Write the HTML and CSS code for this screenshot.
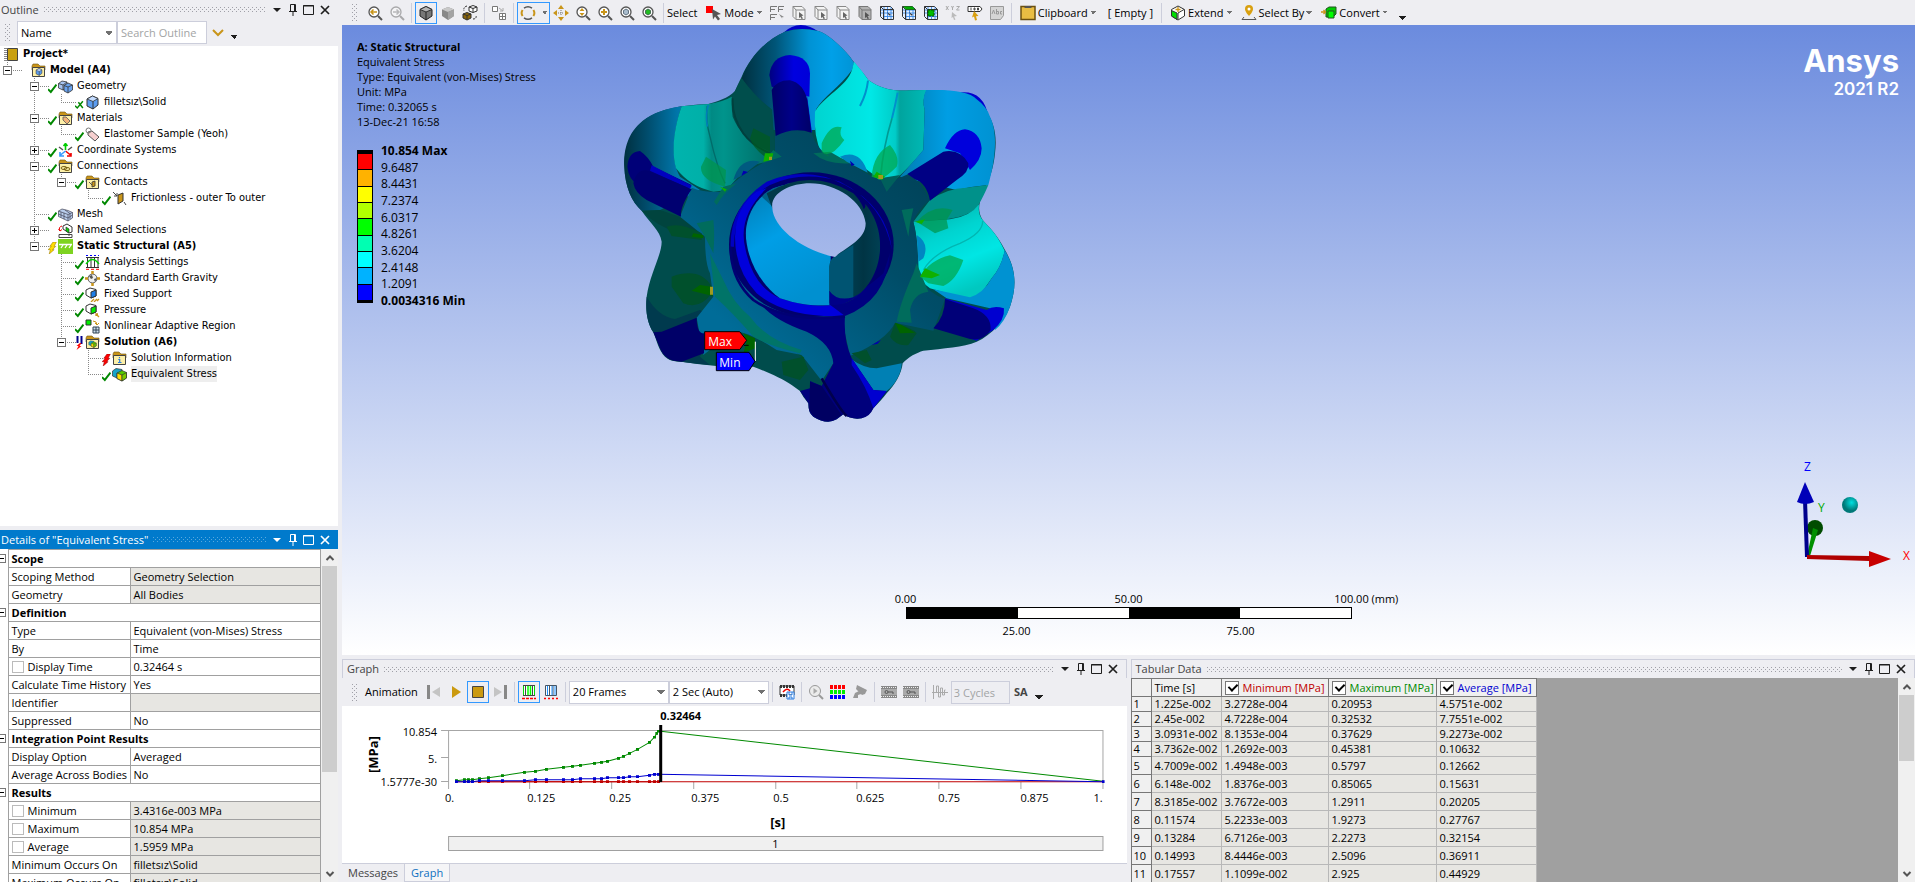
FILE: index.html
```html
<!DOCTYPE html>
<html lang="en">
<head>
  <meta charset="UTF-8" />
  <meta name="viewport" content="width=device-width, initial-scale=1.0"/>
  <title>A: Static Structural - Mechanical</title>
  <link rel="stylesheet" href="styles.css">
</head>
<body>

  <!-- shared icons -->
  <svg class="defs" aria-hidden="true">
    <symbol id="i-down" viewBox="0 0 14 14"><path d="M3 5h8l-4 4z" fill="currentColor"/></symbol>
    <symbol id="i-pin" viewBox="0 0 14 14"><path d="M4.500 8V1.500h5V8M3 8.500h8M7 9v4M8.500 2v6" fill="none" stroke="currentColor"/></symbol>
    <symbol id="i-max" viewBox="0 0 14 14"><path d="M1.500 2.500h10v9h-10zM1 3h11" fill="none" stroke="currentColor"/></symbol>
    <symbol id="i-close" viewBox="0 0 14 14"><path d="M3 3l8 8M11 3l-8 8" stroke="currentColor" stroke-width="1.700"/></symbol>
    <symbol id="i-up" viewBox="0 0 14 14"><path d="M3.500 9L7 5.500 10.500 9" fill="none" stroke="#555" stroke-width="2"/></symbol>
    <symbol id="i-dn" viewBox="0 0 14 14"><path d="M3.500 5L7 8.500 10.500 5" fill="none" stroke="#555" stroke-width="2"/></symbol>

    <symbol id="s-check" viewBox="0 0 8 9"><path d="M0 5.500L2.500 8 7.500 1.500" fill="none" stroke="#080" stroke-width="1.700"/></symbol>
    <symbol id="s-cross" viewBox="0 0 8 9"><path d="M0 6l2 2 5-6M3 3l4 5" fill="none" stroke="#080" stroke-width="1.300"/></symbol>
    <symbol id="s-bolt" viewBox="0 0 8 11"><path d="M4.500 0h3L5.500 4H7l-3 3h1.500L1 11l1-4H0l3-3H1.500z" fill="#fd0" stroke="#970" stroke-width=".5"/></symbol>
    <symbol id="s-bolt-red" viewBox="0 0 8 11"><path d="M4.500 0h3L5.500 4H7l-3 3h1.500L1 11l1-4H0l3-3H1.500z" fill="#f00" stroke="#900" stroke-width=".5"/></symbol>
    <symbol id="s-solve" viewBox="0 0 8 14"><path d="M1 0h2v7H1zM5 0h2v8H5z" fill="#00008b"/><path d="M4.500 7L1 10h2l-2 4 5-4H4l2-3z" fill="#f00"/></symbol>

    <symbol id="i-project" viewBox="0 0 15 15"><path d="M3.500 1.500h10v12h-10z" fill="#c9a010" stroke="#444"/><path d="M1.500 1v13" stroke="#888" stroke-width="3" stroke-dasharray="1 1"/></symbol>
    <symbol id="i-folder" viewBox="0 0 15 15"><path d="M1 3l1-2h5l2 2h5v4H1z" fill="#c9951a" stroke="#6b5010" stroke-width=".6"/><path d="M1.500 4.500h12v9h-12z" fill="#fdf0a8" stroke="#444"/></symbol>
    <symbol id="i-cube" viewBox="0 0 15 15"><path d="M2 4l5.500-3L13 3.500V10l-5 4-6-3z" fill="#5c9df0" stroke="#333"/><path d="M2 4l6 2.500L13 3.500 7.500 1z" fill="#c4dcff" stroke="#333" stroke-width=".8"/><path d="M8 6.500V14" stroke="#333"/></symbol>
    <symbol id="i-cubes" viewBox="0 0 15 15"><g stroke="#333" stroke-width=".8"><path d="M.5 4.500L4 2l5 1v5L5 11 .5 9z" fill="#a6c3ef"/><path d="M.5 4.500L5 6l4-3M5 6v5" fill="none"/><path d="M6 6.500L10 4l4.500 2v5L10 14l-4-2z" fill="#6aa3ee"/><path d="M6 6.500l4 1.500 4.500-2M10 8v6" fill="none"/></g></symbol>
    <symbol id="i-model" viewBox="0 0 15 15"><use href="#i-folder"/><use href="#i-cube" x="4" y="5" width="8" height="8"/></symbol>
    <symbol id="i-materials" viewBox="0 0 15 15"><use href="#i-folder"/><path d="M5 6h3l4 4-3 3-4-4z" fill="#f2b27a" stroke="#555" stroke-width=".8"/></symbol>
    <symbol id="i-conn" viewBox="0 0 15 15"><use href="#i-folder"/><ellipse cx="6" cy="9" rx="3" ry="1.500" fill="none" stroke="#7a6010"/><ellipse cx="9" cy="10" rx="3" ry="1.500" fill="none" stroke="#7a6010"/></symbol>
    <symbol id="i-contacts" viewBox="0 0 15 15"><use href="#i-folder"/><path d="M4 7l3 3M7 7l3-1v5l-3 1z" fill="#c9951a" stroke="#333" stroke-width=".8"/></symbol>
    <symbol id="i-tag" viewBox="0 0 15 15"><path d="M3 5l4-1 7 6-4 4-7-6z" fill="#f6cfcf" stroke="#555"/><circle cx="3.500" cy="3.500" r="2.500" fill="none" stroke="#777"/></symbol>
    <symbol id="i-axes" viewBox="0 0 15 15"><path d="M7.500 7V1M5.500 3l2-2.500 2 2.500" stroke="#0c0" stroke-width="1.600" fill="none"/><path d="M7.500 8l5 4M9 13h4v-3" stroke="#e00" stroke-width="1.600" fill="none"/><path d="M7.500 8l-5 4M2 9v4h4" stroke="#39f" stroke-width="1.600" fill="none"/><path d="M1 4l4 3M14 4l-4 3" stroke="#555" stroke-width="1.500"/></symbol>
    <symbol id="i-friction" viewBox="0 0 15 15"><path d="M6 4l5-2v8l-5 3z" fill="#c9951a" stroke="#333"/><path d="M1 1l4 4M12 11l2 3M2 5h3V2" stroke="#444" fill="none"/></symbol>
    <symbol id="i-mesh" viewBox="0 0 15 15"><g stroke="#445" stroke-width=".7" fill="#b9cdec"><path d="M.5 4L4 2l6 1.500 4.500 2V11L10 14 .5 9.500z"/><path d="M.5 4L10 7.500l4.500-2M10 7.500V14M.5 7L10 11l4.500-3M3 5v5.500M6 6v6M7 3l5 3.500V12" fill="none"/></g></symbol>
    <symbol id="i-named" viewBox="0 0 15 15"><path d="M5 3l4-2 5 3v5l-3 1-6-4z" fill="#fff" stroke="#333"/><path d="M8 4l3 2v4L8 8z" fill="#0d0" stroke="#333" stroke-width=".7"/><path d="M4 3Q0 4 2 8M.5 6L2 8l2-1.500" stroke="#e00" fill="none"/><path d="M1 11.500h13v3H1zM11 11v2" fill="#fff" stroke="#444"/></symbol>
    <symbol id="i-static" viewBox="0 0 15 15"><path d="M0 0h15v15H0z" fill="#7ed321"/><path d="M1 5.500h13M3 9l2-3M7 9l2-3M11 9l2-3" stroke="#fff" stroke-width="1.300"/></symbol>
    <symbol id="i-analysis" viewBox="0 0 15 15"><path d="M1 2.500h13M1 12.500h13" stroke="#333"/><path d="M2.500 2v11M6 2v11M9.500 2v11M13 2v11" stroke="#333"/><path d="M1 .5h13" stroke="#00f" stroke-dasharray="2 2"/><path d="M1 14.300h13" stroke="#f00" stroke-dasharray="3 2"/><path d="M1 9Q7.500 0 14 9" fill="none" stroke="#0c0" stroke-width="1.300"/></symbol>
    <symbol id="i-gravity" viewBox="0 0 15 15"><circle cx="7.500" cy="7.500" r="4.500" fill="#eee" stroke="#555"/><path d="M4 5l3-1 1 3-2 1zM9 8l3-1-2 4z" fill="#555"/><path d="M7.500 0v3M7.500 12v3M0 7.500h3M12 7.500h3" stroke="#c9951a" stroke-width="2.500"/></symbol>
    <symbol id="i-fixed" viewBox="0 0 15 15"><path d="M1 3l4-2 6 1.500V9l-5 2-5-3z" fill="#fff" stroke="#333"/><path d="M6 5l5-2v6l-5 2z" fill="#1e7fe8" stroke="#333"/><path d="M6 15l3-3M9 15l3-3M12 14l2-2" stroke="#c9951a" stroke-width="1.300"/></symbol>
    <symbol id="i-pressure" viewBox="0 0 15 15"><path d="M1 3l4-2 6 1.500V9l-5 2-5-3z" fill="#fff" stroke="#333"/><path d="M6 5l5-2v6l-5 2z" fill="#0e0" stroke="#333"/><path d="M14 14l-3-3M11 13v-2h2" stroke="#c9951a" stroke-width="1.300" fill="none"/></symbol>
    <symbol id="i-nonlin" viewBox="0 0 15 15"><path d="M1 1h5v5H1z" fill="#0e0" stroke="#333"/><path d="M8 8h6v6H8zM11 8v6M8 11h6" fill="#cde" stroke="#345"/><path d="M8 2q4 0 4 4M10 4l2 2 2-2" stroke="#c9951a" fill="none"/></symbol>
    <symbol id="i-result" viewBox="0 0 15 15"><g stroke="#333" stroke-width=".7"><path d="M.5 4L4 1.500l6 1V9L5 11 .5 9z" fill="#18a4c8"/><path d="M5 6l5-2.500 4.500 2V11L10 14l-5-2.500z" fill="#5c0"/><path d="M5 6l5 2v6l-5-2.500z" fill="#fd0"/><path d="M10 8l4.500-2.500V11L10 14z" fill="#7c0"/></g></symbol>
    <symbol id="i-solution" viewBox="0 0 15 15"><use href="#i-folder"/><use href="#i-result" x="3" y="5" width="9" height="8"/></symbol>
    <symbol id="i-info" viewBox="0 0 15 15"><use href="#i-folder"/><path d="M7.500 6v1.200M6.300 8.500h1.400V11M6 11.500h3.500" stroke="#2a7de1" fill="none" stroke-width="1.200"/></symbol>

    <symbol id="t-lens" viewBox="0 0 16 16"><circle cx="7" cy="7" r="5" fill="#fff" stroke="#555" stroke-width="1.300"/><path d="M11 11l4 4" stroke="#555" stroke-width="2"/></symbol>
    <symbol id="t-prev" viewBox="0 0 16 16"><use href="#t-lens"/><path d="M4 7h6M6.500 4.500L4 7l2.500 2.500" stroke="#c9951a" fill="none" stroke-width="1.500"/></symbol>
    <symbol id="t-next" viewBox="0 0 16 16"><g opacity=".45"><use href="#t-lens"/><path d="M4 7h6M7.500 4.500L10 7 7.500 9.500" stroke="#777" fill="none" stroke-width="1.500"/></g></symbol>
    <symbol id="t-zoom" viewBox="0 0 16 16"><use href="#t-lens"/><path d="M7 3L9.500 6h-5zM7 11L9.500 8h-5z" fill="#c9951a"/></symbol>
    <symbol id="t-zoomin" viewBox="0 0 16 16"><use href="#t-lens"/><path d="M4 7h6M7 4v6" stroke="#c9951a" stroke-width="2"/></symbol>
    <symbol id="t-fit" viewBox="0 0 16 16"><use href="#t-lens"/><path d="M4.500 5.500L7 4l2.500 1.500v3L7 10 4.500 8.500z" fill="#a9bccd" stroke="#456" stroke-width=".8"/></symbol>
    <symbol id="t-fitsel" viewBox="0 0 16 16"><use href="#t-lens"/><path d="M4.500 5.500L7 4l2.500 1.500v3L7 10 4.500 8.500z" fill="#2b2" stroke="#354" stroke-width=".8"/></symbol>
    <symbol id="t-shaded" viewBox="0 0 16 16"><path d="M2 4.500l6-3 6 3V11l-6 4-6-4z" fill="#777" stroke="#222"/><path d="M2 4.500L8 7l6-2.500-6-3z" fill="#b5b5b5" stroke="#333"/><path d="M8 7v8" stroke="#222"/></symbol>
    <symbol id="t-solid" viewBox="0 0 16 16"><path d="M2 4.500l6-2.500 6 2.500V11l-6 4-6-4z" fill="#888"/><path d="M2 4.500L8 7l6-2.500L8 2z" fill="#c8c8c8"/><path d="M8 7l6-2.500V11l-6 4z" fill="#a3a3a3"/></symbol>
    <symbol id="t-swap" viewBox="0 0 16 16"><path d="M7 2l4-1.500 4 1.500v4l-4 1.500L7 6zM7 2l4 1.500L15 2M11 3.500v4" fill="#fff" stroke="#333"/><path d="M1 9l4-1.500L9 9v4l-4 2-4-2z" fill="#8a6508" stroke="#333"/><path d="M1 9l4 1.500L9 9M5 10.500V15" stroke="#333" fill="none"/><path d="M5 1Q1 2 2 6M11 14q4 0 3-4" fill="none" stroke="#333" stroke-dasharray="2 1"/></symbol>
    <symbol id="t-explode" viewBox="0 0 16 16"><path d="M1.500 1.500h5v5h-5zM8.500 8.500h6v6h-6zM11.500 8.500v6M8.500 11.500h6" fill="#fff" stroke="#777"/><path d="M8 3l4 3M12 3v3H9" stroke="#aaa" fill="none"/></symbol>
    <symbol id="t-rotate" viewBox="0 0 16 16"><path d="M4 3.200Q8 .2 12 3.200M12 12.800Q8 15.800 4 12.800" fill="none" stroke="#555" stroke-width="1.500"/><path d="M2.600 5q-2 3 0 6M13.400 5q2 3 0 6" fill="none" stroke="#c9951a" stroke-width="2"/></symbol>
    <symbol id="t-pan" viewBox="0 0 16 16"><path d="M8 0l3 4H5zM8 16l3-4H5zM0 8l4-3v6zM16 8l-4-3v6z" fill="#c9951a"/><path d="M8 5v6M5 8h6" stroke="#777" stroke-dasharray="1 1"/></symbol>
    <symbol id="t-mode" viewBox="0 0 16 16"><path d="M0 1h7v7H0z" fill="#f00"/><path d="M6 4l9 5-4 1 3 4-2 1.500-3-4-2 3z" fill="#555"/></symbol>
    <symbol id="t-selall" viewBox="0 0 16 16"><path d="M1.500 7V1.500H8M2 4.500h4M9.500 7V1.500H15M10 4.500h4M1.500 15V9.500H8M2 12.500h4" fill="none" stroke="#777"/><path d="M10 9l5 3-2.500.5L14 15z" fill="#888"/></symbol>
    <symbol id="t-box" viewBox="0 0 16 16"><path d="M2 1.500h9l3 3v10H5l-3-3zM5 5h9M5 5v9.500M2 1.500L5 5" fill="#f4f4f4" stroke="#888"/><path d="M8 7l4.500 3.500-2 .5 1.500 2.500-1.500.5-1-2-1.500 1z" fill="#666"/></symbol>
    <symbol id="t-boxf" viewBox="0 0 16 16"><path d="M2 1.500h9l3 3v10H5l-3-3zM5 5h9M5 5v9.500M2 1.500L5 5" fill="#b2b2b2" stroke="#777"/><path d="M8 7l4.500 3.500-2 .5 1.500 2.500-1.500.5-1-2-1.500 1z" fill="#555"/></symbol>
    <symbol id="t-grid" viewBox="0 0 16 16"><path d="M1.500 1.500h10l3 3v10h-10l-3-3z" fill="#e5f0ff" stroke="#333"/><path d="M2 5h12M2 8h12M4 11.500h10M5 2v12M8.500 2v12M12 2v12" stroke="#2a7de1" stroke-width=".8"/><path d="M1.500 1.500l3 3h10M4.500 4.500v10" fill="none" stroke="#333"/><path d="M8 7l4 3-2 .5 1.500 2.500z" fill="#333"/></symbol>
    <symbol id="t-gridtop" viewBox="0 0 16 16"><use href="#t-grid"/><path d="M2 1.500h9.500l2.500 3H5z" fill="#0a0"/></symbol>
    <symbol id="t-gridsolid" viewBox="0 0 16 16"><use href="#t-grid"/><path d="M5 5h6v6H5z" fill="#0b0" stroke="#050" stroke-dasharray="2 1"/></symbol>
    <symbol id="t-xyz" viewBox="0 0 16 16"><path d="M1 1l2.500 4M3.500 1L1 5M6.500 1l1 2 1-2M7.500 3v2M11.500 1.500h3l-3 3.500h3" stroke="#aaa" fill="none"/><path d="M7 7l5 4-3 .5 1.500 3-1.500.5-1-3-1.500 1z" fill="#bbb"/></symbol>
    <symbol id="t-node" viewBox="0 0 16 16"><path d="M1 1.500h12l2 2.500-2 2.500H1z" fill="#fff" stroke="#333"/><path d="M4 2.500v3M7 3h1v2H7zM10.500 3h1v2h-1z" stroke="#333" fill="none" stroke-width=".9"/><path d="M7 6l4.500 5-2.500.3L10 15l-2 .5-1-4-2 1z" fill="#d9a010"/></symbol>
    <symbol id="t-abc" viewBox="0 0 16 16"><path d="M1.500 1.500h13v9l-3 4h-10z" fill="#d5d5d5" stroke="#999"/><path d="M3 9l1.500-4L6 9M7.500 4v5h2V6.500h-2M13 6.500h-1.500V9H13" stroke="#999" fill="none"/></symbol>
    <symbol id="t-clip" viewBox="0 0 16 16"><path d="M1 1.500h14v13H1z" fill="#e9bd43" stroke="#6b5010" stroke-width="1.500"/><path d="M4 3h8L10 1H6z" fill="#555"/></symbol>
    <symbol id="t-extend" viewBox="0 0 16 16"><path d="M1.500 4.500L8 1l6.500 3.500V11L8 15l-6.500-4z" fill="#fff" stroke="#333"/><path d="M1.500 5.500L7 8v6.500L1.500 11z" fill="#0d0" stroke="#333"/><path d="M8 8l6-3.500M8 8v6" stroke="#333"/><path d="M8 2v5M5.500 4.500h5" stroke="#c9951a" stroke-width="1.300"/></symbol>
    <symbol id="t-by" viewBox="0 0 16 16"><path d="M8 0a4 4 0 0 1 4 4c0 3-4 7-4 7S4 7 4 4a4 4 0 0 1 4-4z" fill="#d9a010"/><circle cx="8" cy="4" r="1.500" fill="#fff"/><path d="M1 14.500h14M3 12l-2 2.500M13 12l2 2.500" stroke="#555"/></symbol>
    <symbol id="t-convert" viewBox="0 0 16 16"><path d="M5 4l3-2h7v7l-3 3H5z" fill="#0c0" stroke="#252"/><path d="M7 6h6v7H7z" fill="#0f0" stroke="#252"/><path d="M0 7h4M2.500 5L4.500 7l-2 2" stroke="#c9951a" fill="none" stroke-width="1.300"/></symbol>

    <symbol id="g-first" viewBox="0 0 16 16"><path d="M1 1h3v14H1z" fill="#888"/><path d="M14 3v10L6 8z" fill="#c4c4c4"/></symbol>
    <symbol id="g-play" viewBox="0 0 16 16"><path d="M4 2l9 6-9 6z" fill="#cb9a10"/></symbol>
    <symbol id="g-stop" viewBox="0 0 16 16"><path d="M2.500 2.500h11v11h-11z" fill="#cb9a10" stroke="#444"/></symbol>
    <symbol id="g-last" viewBox="0 0 16 16"><path d="M12 1h3v14h-3z" fill="#888"/><path d="M2 3v10l8-5z" fill="#c4c4c4"/></symbol>
    <symbol id="g-dist" viewBox="0 0 16 16"><path d="M2.500 1.500h11v10h-11z" fill="#fff" stroke="#0d0"/><path d="M4.500 2v9M11.500 2v9" stroke="#444"/><path d="M7 2v9M9.500 2v9" stroke="#0f0" stroke-width="1.500"/><path d="M2 1.500h12M2 11.500h12" stroke="#444"/><path d="M1 14.500h14" stroke="#f00" stroke-width="1.500" stroke-dasharray="3 1"/></symbol>
    <symbol id="g-time" viewBox="0 0 16 16"><path d="M2.500 1.500h11v10h-11zM6.500 2v9M10 2v9" fill="#fff" stroke="#456"/><path d="M4.500 2v9M9 2v9M12 2v9" stroke="#1e90ff"/><path d="M1 14.500h14" stroke="#f00" stroke-width="1.500" stroke-dasharray="2 2"/></symbol>
    <symbol id="g-export" viewBox="0 0 16 16"><path d="M1 2h14v9H1z" fill="#fff" stroke="#333"/><path d="M1 2.500h14M1 11.500h7" stroke="#333" stroke-width="3" stroke-dasharray="2 1"/><path d="M4 8q4-5 7-1" stroke="#e00" fill="none" stroke-width="1.500"/><path d="M8 8h7v7H8zM10 8v3h3V8M10 15v-2h3v2" fill="#fff" stroke="#2a7de1"/></symbol>
    <symbol id="g-zoom" viewBox="0 0 16 16"><circle cx="7" cy="7" r="5.500" fill="#ececec" stroke="#999"/><path d="M5.500 4l4 3-4 3z" fill="#aaa"/><path d="M11 11l4 4" stroke="#999" stroke-width="2"/></symbol>
    <symbol id="g-rgb" viewBox="0 0 16 16"><g stroke-width="4" stroke-dasharray="3 1"><path d="M0 3h16" stroke="#f00"/><path d="M0 8h16" stroke="#0e0"/><path d="M0 13h16" stroke="#00f"/></g></symbol>
    <symbol id="g-cam" viewBox="0 0 16 16"><path d="M5 1l10 5-2 4-3 1-6-6zM3 9l4-2 2 3-3 1v3H1" fill="#999"/></symbol>
    <symbol id="g-film" viewBox="0 0 16 16"><path d="M0 2h16v12H0z" fill="#888"/><path d="M0 3.500h16M0 12.500h16" stroke="#eee" stroke-width="1" stroke-dasharray="1 1"/><path d="M0 5h16v6H0z" fill="#aaa"/><circle cx="5.500" cy="8" r="1.500" fill="none" stroke="#555"/><path d="M7 8h5v2" stroke="#555" fill="none"/></symbol>
    <symbol id="g-wave" viewBox="0 0 16 16"><path d="M1.500 1v14M0 8.500h16M4.500 8V2h2v11h2V4h2v7h2V6h1" stroke="#aaa" fill="none"/></symbol>
  </svg>

  <div class="app">

    <aside class="left">
      <section class="panel outline">
        <header class="titlebar">
          <h2>Outline</h2><span class="dots"></span>
          <button aria-label="Menu"><svg><use href="#i-down"/></svg></button>
          <button aria-label="Pin"><svg><use href="#i-pin"/></svg></button>
          <button aria-label="Maximize"><svg><use href="#i-max"/></svg></button>
          <button aria-label="Close"><svg><use href="#i-close"/></svg></button>
        </header>
        <div class="searchbar">
          <span class="grip"></span>
          <select class="drop filter" aria-label="Filter by"><option>Name</option></select>
          <input type="text" class="search" placeholder="Search Outline" aria-label="Search Outline">
          <button class="chev" aria-label="Next match"><svg viewBox="0 0 14 14"><path d="M2 4l5 5 5-5" fill="none" stroke="#c9951a" stroke-width="2"/></svg></button>
          <button class="more" aria-label="More"></button>
        </div>

        <div class="tree">
          <div class="row root"><svg class="ico"><use href="#i-project"/></svg><b>Project*</b></div>
          <ul>
            <li>
              <div class="row"><button class="exp" aria-label="Collapse"></button><i class="st"></i><svg class="ico"><use href="#i-model"/></svg><b>Model (A4)</b></div>
              <ul>
                <li>
                  <div class="row"><button class="exp" aria-label="Collapse"></button><svg class="st"><use href="#s-check"/></svg><svg class="ico"><use href="#i-cubes"/></svg><span>Geometry</span></div>
                  <ul>
                    <li><div class="row leaf"><svg class="st"><use href="#s-cross"/></svg><svg class="ico"><use href="#i-cube"/></svg><span>filletsız\Solid</span></div></li>
                  </ul>
                </li>
                <li>
                  <div class="row"><button class="exp" aria-label="Collapse"></button><svg class="st"><use href="#s-check"/></svg><svg class="ico"><use href="#i-materials"/></svg><span>Materials</span></div>
                  <ul>
                    <li><div class="row leaf"><svg class="st"><use href="#s-check"/></svg><svg class="ico"><use href="#i-tag"/></svg><span>Elastomer Sample (Yeoh)</span></div></li>
                  </ul>
                </li>
                <li><div class="row"><button class="exp plus" aria-label="Expand"></button><svg class="st"><use href="#s-check"/></svg><svg class="ico"><use href="#i-axes"/></svg><span>Coordinate Systems</span></div></li>
                <li>
                  <div class="row"><button class="exp" aria-label="Collapse"></button><svg class="st"><use href="#s-check"/></svg><svg class="ico"><use href="#i-conn"/></svg><span>Connections</span></div>
                  <ul>
                    <li>
                      <div class="row"><button class="exp" aria-label="Collapse"></button><svg class="st"><use href="#s-check"/></svg><svg class="ico"><use href="#i-contacts"/></svg><span>Contacts</span></div>
                      <ul>
                        <li><div class="row leaf"><svg class="st"><use href="#s-check"/></svg><svg class="ico"><use href="#i-friction"/></svg><span>Frictionless - outer To outer</span></div></li>
                      </ul>
                    </li>
                  </ul>
                </li>
                <li><div class="row leaf"><svg class="st"><use href="#s-check"/></svg><svg class="ico"><use href="#i-mesh"/></svg><span>Mesh</span></div></li>
                <li><div class="row"><button class="exp plus" aria-label="Expand"></button><i class="st"></i><svg class="ico"><use href="#i-named"/></svg><span>Named Selections</span></div></li>
                <li>
                  <div class="row"><button class="exp" aria-label="Collapse"></button><svg class="st"><use href="#s-bolt"/></svg><svg class="ico"><use href="#i-static"/></svg><b>Static Structural (A5)</b></div>
                  <ul>
                    <li><div class="row leaf"><svg class="st"><use href="#s-check"/></svg><svg class="ico"><use href="#i-analysis"/></svg><span>Analysis Settings</span></div></li>
                    <li><div class="row leaf"><svg class="st"><use href="#s-check"/></svg><svg class="ico"><use href="#i-gravity"/></svg><span>Standard Earth Gravity</span></div></li>
                    <li><div class="row leaf"><svg class="st"><use href="#s-check"/></svg><svg class="ico"><use href="#i-fixed"/></svg><span>Fixed Support</span></div></li>
                    <li><div class="row leaf"><svg class="st"><use href="#s-check"/></svg><svg class="ico"><use href="#i-pressure"/></svg><span>Pressure</span></div></li>
                    <li><div class="row leaf"><svg class="st"><use href="#s-check"/></svg><svg class="ico"><use href="#i-nonlin"/></svg><span>Nonlinear Adaptive Region</span></div></li>
                    <li>
                      <div class="row"><button class="exp" aria-label="Collapse"></button><svg class="st tall"><use href="#s-solve"/></svg><svg class="ico"><use href="#i-solution"/></svg><b>Solution (A6)</b></div>
                      <ul>
                        <li><div class="row leaf"><svg class="st"><use href="#s-bolt-red"/></svg><svg class="ico"><use href="#i-info"/></svg><span>Solution Information</span></div></li>
                        <li><div class="row leaf"><svg class="st"><use href="#s-check"/></svg><svg class="ico"><use href="#i-result"/></svg><span class="selected">Equivalent Stress</span></div></li>
                      </ul>
                    </li>
                  </ul>
                </li>
              </ul>
            </li>
          </ul>
        </div>
      </section>

      <section class="panel details">
        <header class="titlebar active">
          <h2>Details of "Equivalent Stress"</h2><span class="dots"></span>
          <button aria-label="Menu"><svg><use href="#i-down"/></svg></button>
          <button aria-label="Pin"><svg><use href="#i-pin"/></svg></button>
          <button aria-label="Maximize"><svg><use href="#i-max"/></svg></button>
          <button aria-label="Close"><svg><use href="#i-close"/></svg></button>
        </header>
        <div class="scroller">
          <div class="clip">
            <table class="props">
              <colgroup><col class="c-gut"><col class="c-name"><col></colgroup>
              <tr><td class="gut"><button class="exp" aria-label="Collapse"></button></td><th colspan="2">Scope</th></tr>
              <tr><td class="gut"></td><td>Scoping Method</td><td class="ro">Geometry Selection</td></tr>
              <tr><td class="gut"></td><td>Geometry</td><td class="ro">All Bodies</td></tr>
              <tr><td class="gut"><button class="exp" aria-label="Collapse"></button></td><th colspan="2">Definition</th></tr>
              <tr><td class="gut"></td><td>Type</td><td>Equivalent (von-Mises) Stress</td></tr>
              <tr><td class="gut"></td><td>By</td><td>Time</td></tr>
              <tr><td class="gut"></td><td><label><input type="checkbox">Display Time</label></td><td>0.32464 s</td></tr>
              <tr><td class="gut"></td><td>Calculate Time History</td><td>Yes</td></tr>
              <tr><td class="gut"></td><td>Identifier</td><td class="ro"></td></tr>
              <tr><td class="gut"></td><td>Suppressed</td><td>No</td></tr>
              <tr><td class="gut"><button class="exp" aria-label="Collapse"></button></td><th colspan="2">Integration Point Results</th></tr>
              <tr><td class="gut"></td><td>Display Option</td><td>Averaged</td></tr>
              <tr><td class="gut"></td><td>Average Across Bodies</td><td>No</td></tr>
              <tr><td class="gut"><button class="exp" aria-label="Collapse"></button></td><th colspan="2">Results</th></tr>
              <tr><td class="gut"></td><td><label><input type="checkbox">Minimum</label></td><td class="ro">3.4316e-003 MPa</td></tr>
              <tr><td class="gut"></td><td><label><input type="checkbox">Maximum</label></td><td class="ro">10.854 MPa</td></tr>
              <tr><td class="gut"></td><td><label><input type="checkbox">Average</label></td><td class="ro">1.5959 MPa</td></tr>
              <tr><td class="gut"></td><td>Minimum Occurs On</td><td class="ro">filletsız\Solid</td></tr>
              <tr><td class="gut"></td><td>Maximum Occurs On</td><td class="ro">filletsız\Solid</td></tr>
            </table>
          </div>
          <div class="vbar">
            <button aria-label="Scroll up"><svg><use href="#i-up"/></svg></button>
            <div class="thumb"></div><span class="fill"></span>
            <button aria-label="Scroll down"><svg><use href="#i-dn"/></svg></button>
          </div>
        </div>
      </section>
    </aside>

    <main class="right">
      <div class="toolbar">
        <span class="grip"></span>
        <button aria-label="Previous view"><svg><use href="#t-prev"/></svg></button>
        <button aria-label="Next view"><svg><use href="#t-next"/></svg></button>
        <hr>
        <button class="on" aria-label="Shaded exterior and edges"><svg><use href="#t-shaded"/></svg></button>
        <button aria-label="Shaded exterior"><svg><use href="#t-solid"/></svg></button>
        <button aria-label="Wireframe"><svg><use href="#t-swap"/></svg></button>
        <hr>
        <button aria-label="Explode"><svg><use href="#t-explode"/></svg></button>
        <hr>
        <button class="on wide" aria-label="Rotate"><svg><use href="#t-rotate"/></svg><span class="arr"></span></button>
        <button aria-label="Pan"><svg><use href="#t-pan"/></svg></button>
        <button aria-label="Zoom"><svg><use href="#t-zoom"/></svg></button>
        <button aria-label="Box zoom"><svg><use href="#t-zoomin"/></svg></button>
        <button aria-label="Zoom to fit"><svg><use href="#t-fit"/></svg></button>
        <button aria-label="Zoom to selection"><svg><use href="#t-fitsel"/></svg></button>
        <hr>
        <span class="lbl">Select</span>
        <button class="text"><svg><use href="#t-mode"/></svg>Mode<span class="arr"></span></button>
        <button aria-label="Smart select"><svg><use href="#t-selall"/></svg></button>
        <button aria-label="Vertex"><svg><use href="#t-box"/></svg></button>
        <button aria-label="Edge"><svg><use href="#t-box"/></svg></button>
        <button aria-label="Face"><svg><use href="#t-box"/></svg></button>
        <button aria-label="Body"><svg><use href="#t-boxf"/></svg></button>
        <button aria-label="Node"><svg><use href="#t-grid"/></svg></button>
        <button aria-label="Element face"><svg><use href="#t-gridtop"/></svg></button>
        <button aria-label="Element"><svg><use href="#t-gridsolid"/></svg></button>
        <button aria-label="Coordinates"><svg><use href="#t-xyz"/></svg></button>
        <button aria-label="Label"><svg><use href="#t-node"/></svg></button>
        <button aria-label="Annotation"><svg><use href="#t-abc"/></svg></button>
        <hr>
        <button class="text"><svg><use href="#t-clip"/></svg>Clipboard<span class="arr"></span></button>
        <span class="lbl empty">[ Empty ]</span>
        <hr>
        <button class="text"><svg><use href="#t-extend"/></svg>Extend<span class="arr"></span></button>
        <button class="text"><svg><use href="#t-by"/></svg>Select By<span class="arr"></span></button>
        <button class="text"><svg><use href="#t-convert"/></svg>Convert<span class="arr"></span></button>
        <button class="more" aria-label="More"></button>
      </div>

      <section class="viewport">
        <div class="caption">
          <b>A: Static Structural</b>
          <span>Equivalent Stress</span>
          <span>Type: Equivalent (von-Mises) Stress</span>
          <span>Unit: MPa</span>
          <span>Time: 0.32065 s</span>
          <span>13-Dec-21 16:58</span>
        </div>
        <div class="legend">
          <div class="bands"><i class="b1"></i><i class="b2"></i><i class="b3"></i><i class="b4"></i><i class="b5"></i><i class="b6"></i><i class="b7"></i><i class="b8"></i><i class="b9"></i></div>
          <div class="values">
            <b>10.854 Max</b><span>9.6487</span><span>8.4431</span><span>7.2374</span><span>6.0317</span><span>4.8261</span><span>3.6204</span><span>2.4148</span><span>1.2091</span><b>0.0034316 Min</b>
          </div>
        </div>

        <!-- stress plot -->
        <svg class="part" viewBox="0 15 1320 1215">
          <defs>
            <linearGradient id="lobeTop"><stop offset="0" stop-color="#00303f"/><stop offset=".3" stop-color="#005578"/><stop offset=".6" stop-color="#0092d4"/><stop offset=".8" stop-color="#00a0e8"/><stop offset="1" stop-color="#0094d6"/></linearGradient>
            <linearGradient id="lobeTL"><stop offset="0" stop-color="#003040"/><stop offset=".3" stop-color="#004c6c"/><stop offset=".7" stop-color="#0076aa"/><stop offset="1" stop-color="#0084be"/></linearGradient>
            <linearGradient id="lobeTR"><stop offset="0" stop-color="#007cb2"/><stop offset=".5" stop-color="#009ee4"/><stop offset="1" stop-color="#0092d2"/></linearGradient>
            <linearGradient id="valTL"><stop offset="0" stop-color="#00b4ae"/><stop offset=".3" stop-color="#00b0a8"/><stop offset=".38" stop-color="#008a84"/><stop offset=".5" stop-color="#00948c"/><stop offset="1" stop-color="#006a64"/></linearGradient>
            <linearGradient id="valTR"><stop offset="0" stop-color="#00d4d0"/><stop offset=".5" stop-color="#00e8e6"/><stop offset=".72" stop-color="#00ccc8"/><stop offset=".76" stop-color="#00a49e"/><stop offset="1" stop-color="#00bab6"/></linearGradient>
            <linearGradient id="valR" x1="0" y1="0" x2=".4" y2="1"><stop offset="0" stop-color="#00a8a0"/><stop offset=".4" stop-color="#00d4d0"/><stop offset=".7" stop-color="#00e6e4"/><stop offset="1" stop-color="#00c8c0"/></linearGradient>
            <linearGradient id="face" x1=".9" y1=".1" x2=".2" y2=".8"><stop offset="0" stop-color="#004258"/><stop offset=".4" stop-color="#004d68"/><stop offset="1" stop-color="#006c98"/></linearGradient>
            <linearGradient id="blueUp" x1="0" x2="1"><stop offset="0" stop-color="#000080"/><stop offset=".6" stop-color="#0000e0"/><stop offset="1" stop-color="#0000d8"/></linearGradient>
            <linearGradient id="spoke" x1="0" x2="1"><stop offset="0" stop-color="#000066"/><stop offset=".5" stop-color="#000088"/><stop offset="1" stop-color="#000068"/></linearGradient>
            <linearGradient id="bore" x1="0" y1="0" x2=".4" y2="1"><stop offset="0" stop-color="#0078ac"/><stop offset=".5" stop-color="#009ee6"/><stop offset="1" stop-color="#0090d0"/></linearGradient>
            <linearGradient id="boreR"><stop offset="0" stop-color="#004a60"/><stop offset=".6" stop-color="#003444"/><stop offset="1" stop-color="#004458"/></linearGradient>
            <linearGradient id="holeBg" x1="0" y1="0" x2="0" y2="1"><stop offset="0" stop-color="#97ade7"/><stop offset="1" stop-color="#a5b8ea"/></linearGradient>
            <clipPath id="rim"><path d="M437 640C440 580 470 530 520 505Q640 460 760 520C830 570 842 640 840 690C835 760 800 820 735 850C690 860 620 862 540 835C480 790 440 720 437 640z"/></clipPath>
          </defs>
          <path d="M550 38Q600 -8 660 38z" fill="#0000c8"/>
          <path d="M1080 217Q1150 210 1165 288L1120 240z" fill="#0000d0"/>
          <path fill="#004c4c" d="M555 35C500 58 450 110 425 170Q410 200 405 213C385 235 350 245 325 252C240 255 180 268 140 295C95 325 72 380 73 440C75 500 95 545 125 572C150 610 180 630 185 665C185 705 150 760 140 830C135 880 145 915 160 937C170 960 175 990 195 1010Q210 1025 245 1025Q300 1034 350 1038L460 1040C500 1055 545 1075 575 1095L600 1113Q608 1130 625 1150Q625 1180 640 1190Q680 1215 710 1198L730 1183Q755 1200 785 1195Q810 1185 820 1165Q845 1140 860 1120C885 1095 905 1060 908 1030C925 1010 950 998 970 992C1030 985 1090 982 1130 965C1175 945 1215 900 1230 860C1250 800 1250 750 1215 690C1190 640 1165 620 1148 600Q1132 575 1140 545C1155 500 1178 470 1185 400C1192 340 1180 310 1163 280Q1150 250 1110 228C1060 208 1000 210 930 211C880 215 840 205 805 180C785 150 755 120 750 110C720 75 680 40 655 33Q600 20 555 35z"/>
          <path d="M425 175C450 110 500 58 555 35Q600 20 655 33C680 40 720 75 750 110L762 128L756 150C720 200 670 230 648 268L645 330L520 330L515 268C480 240 450 215 425 175z" fill="url(#lobeTop)"/>
          <path d="M245 259C180 268 140 290 120 310C80 345 70 400 73 440C75 500 95 545 125 572L180 570L300 510L240 470C210 420 220 330 245 259z" fill="url(#lobeTL)"/>
          <path d="M245 259L325 252Q370 245 395 230C400 290 440 360 520 400L500 425L440 440L380 510L340 515Q270 500 228 445C210 380 230 300 245 259z" fill="url(#valTL)"/>
          <path d="M405 213L425 175Q470 235 516 270L525 400Q430 370 398 290Q392 250 398 225z" fill="#004e4c"/>
          <path d="M398 235Q395 290 430 340Q460 380 515 402" fill="none" stroke="#00403e" stroke-width="6"/>
          <path d="M322 258Q316 300 330 350Q350 440 375 490" fill="none" stroke="#006c6a" stroke-width="4"/>
          <path d="M325 255Q316 280 322 320" fill="none" stroke="#0080b8" stroke-width="5"/>
          <path d="M125 572L180 570L240 590Q310 610 315 650L240 640Q170 620 125 572z" fill="#00443e"/>
          <path d="M762 125Q785 150 805 180C840 205 880 215 930 211L980 210Q965 240 974 270L970 390Q930 440 885 480L835 478Q800 440 740 420L665 400Q640 350 645 275C670 230 740 200 756 150z" fill="url(#valTR)"/>
          <path d="M804 182Q800 220 780 258M893 218Q885 260 876 295" fill="none" stroke="#0090cc" stroke-width="6"/>
          <path d="M876 295Q850 380 842 470" fill="none" stroke="#009a94" stroke-width="5"/>
          <path d="M978 210C1060 208 1110 215 1130 238Q1160 260 1170 290C1190 330 1192 400 1165 495Q1110 500 1070 510L900 470L970 390L974 270Q965 240 978 210z" fill="url(#lobeTR)"/>
          <path d="M1165 495Q1150 530 1138 550Q1125 585 1040 598L940 605L990 540Q1040 505 1100 503z" fill="#00918a"/>
          <path d="M1138 552Q1132 580 1148 600C1165 620 1190 640 1214 692Q1205 740 1175 775L1140 825Q1110 845 1060 825L990 805Q950 780 955 740Q955 660 940 605L1050 598Q1110 590 1138 552z" fill="url(#valR)"/>
          <path d="M1148 602Q1150 640 1080 670Q1000 700 970 750" fill="none" stroke="#00b6b2" stroke-width="4"/>
          <path d="M1214 690C1250 750 1250 800 1230 860Q1215 905 1185 930L1170 865L1040 835L1000 808L1110 832Q1150 820 1175 775Q1205 740 1214 690z" fill="#0092d2"/>
          <path d="M750 1015Q790 1045 830 1045L905 1030C905 1060 885 1095 860 1113L820 1110z" fill="#0080b4"/>
          <path d="M140 830Q175 890 225 897L300 870L345 900L330 1035Q250 1028 210 1020C175 990 175 960 160 937C145 915 135 880 140 830z" fill="#003a4e"/>
          <path d="M345 900L460 950L450 1038L330 1035L300 1010z" fill="#00504c"/>
          <path d="M525 345Q580 318 635 340Q650 390 690 410Q750 425 780 450L835 480H885L925 462Q960 480 990 540Q950 570 940 605Q955 660 955 770Q985 820 1035 837L1000 932L885 908Q860 960 750 1008L735 940L700 1030L665 1082L605 1005L530 990Q440 930 400 935L310 1005L290 893L340 830L330 760Q315 730 315 650L240 590L275 503Q320 520 370 515Q440 450 525 410z" fill="url(#face)"/>
          <path d="M345 830Q400 880 460 950Q500 975 600 1000L605 990Q500 960 450 890Q400 850 370 780L330 700z" fill="#007468"/>
          <path d="M342 545L370 500L410 490Q370 520 350 555zM290 610L340 600Q345 640 340 700L315 650zM950 730L940 760Q900 850 890 905L935 908L930 870Q940 820 985 815zM905 570L940 565 930 610L925 650Q915 610 905 570zM640 400L690 395 750 430Q680 435 640 400zM485 430L520 390 545 410z" fill="#006c5c"/>
          <path d="M840 475L900 465 860 515z" fill="#00605c"/>
          <path d="M950 645Q990 670 970 715L955 725zM720 410Q780 385 803 458L740 425z" fill="#0086c2"/>
          <path d="M400 480Q420 410 480 425L430 465z" fill="#005a80"/>
          <!-- hot spots -->
          <path d="M665 370Q690 310 725 322Q715 345 733 360Q690 420 665 395zM815 470Q820 400 870 375Q900 410 890 440Q860 470 840 478zM960 770Q990 720 1050 706L1090 720Q1070 780 1030 798L985 790z" fill="#00a850" opacity=".75"/>
          <path d="M375 500Q300 480 303 440L318 410L378 450zM950 605Q1000 550 1058 570L1040 600L1045 625L1005 640z" fill="#009448" opacity=".7"/>
          <path d="M510 420Q460 390 450 355L460 325L510 350z" fill="#005a20" opacity=".7"/>
          <path d="M305 660L215 648L200 620Q240 605 305 640zM335 820Q300 870 250 850L215 800L215 770Q300 740 335 800zM885 910Q940 925 950 940L925 975Q890 980 870 950zM625 1050L600 1080L550 1065L545 1025L610 1010zM755 1000L800 990 815 1020 795 1030z" fill="#00502c"/>
          <path d="M520 400L495 400 490 425 515 420zM855 470L830 455 820 470 845 480zM680 405L665 395 690 410zM380 508L360 500 375 515zM945 605L975 598 965 612zM960 770L975 745 1020 765 995 775z" fill="#10b000"/>
          <path d="M310 655L275 650 280 640 310 645zM338 828L275 812 300 795 335 800zM885 908L905 915 945 938 900 940zM430 940L465 955 465 985 430 1000 440 965zM590 1000L615 1015 605 1010z" fill="#006400"/>
          <path d="M835 465h14v12h-14zM507 410h9v10h-9zM330 800h9v24h-9z" fill="#a09a20"/>
          <!-- spokes -->
          <path d="M508 165Q515 108 570 105Q628 110 630 160L628 230L515 200z" fill="url(#blueUp)"/>
          <path d="M620 220L636 338L626 330z" fill="#0000c8"/>
          <path d="M515 210Q530 180 570 181Q610 190 622 240L634 338Q580 320 527 348z" fill="url(#spoke)"/>
          <path d="M1035 385Q1060 330 1095 328Q1140 335 1145 385Q1145 420 1110 450L1080 400z" fill="#0000dc"/>
          <path d="M922 462L1030 395Q1080 385 1105 430Q1110 455 1070 480L990 542Q980 490 945 478z" fill="#000084"/>
          <path d="M82 440Q85 395 120 393Q145 410 160 440L275 495L240 520L120 500Q85 480 82 440z" fill="#000078"/>
          <path d="M155 436L275 497L270 506L150 452z" fill="#0000c0"/>
          <path d="M100 490Q110 445 145 452L275 508Q240 560 243 590Q180 560 140 540Q105 520 100 490z" fill="#000070"/>
          <path d="M1035 835L1160 870Q1180 855 1212 865Q1215 900 1180 930L1130 962L1050 935z" fill="#0000d0"/>
          <path d="M1035 837L1120 865Q1175 885 1172 930Q1150 965 1110 957L1000 925Q1035 890 1035 837z" fill="#000078"/>
          <path d="M160 937L185 935L290 893Q290 940 312 940V1000L245 1025Q195 1025 180 985z" fill="#000068"/>
          <path d="M430 452l14 4-20 12zM750 422l14 12-10 4zM815 975l28-16-10 12z" fill="#0000b0"/>
          <!-- rim and bore -->
          <path d="M480 850Q560 900 735 888Q730 960 755 1015L820 1110L860 1115L820 1165Q810 1190 785 1195Q755 1200 730 1183L710 1198Q680 1215 640 1190Q625 1180 625 1150L600 1113L630 1105V1083L665 1098L700 1030Q695 970 620 935Q520 900 480 850z" fill="#00007c"/>
          <path d="M755 1015L820 1110L860 1113L820 1165Q800 1100 755 1035z" fill="#0000d0"/>
          <path d="M630 1085L665 1098L725 1185L700 1200Q650 1210 628 1170z" fill="#000062"/>
          <path d="M665 1075Q720 1170 740 1188" fill="none" stroke="#00004c" stroke-width="8"/>
          <ellipse cx="634" cy="674" rx="247" ry="217" fill="#00006c"/>
          <path d="M392 680Q388 560 500 485Q620 435 735 495Q860 560 876 690Q850 550 720 485Q610 450 510 495Q400 560 402 680Z" fill="#0000c0"/>
          <path d="M405 650Q408 560 470 515L500 505Q410 590 437 690Q460 800 540 835Q640 870 735 850V888Q560 895 470 820Q405 750 405 650z" fill="#0000dc"/>
          <path d="M392 680Q392 780 460 840Q560 910 735 889" fill="none" stroke="#000074" stroke-width="8"/>
          <path d="M688 815Q740 860 850 760L870 700Q860 840 735 888L692 856z" fill="#000080"/>
          <g clip-path="url(#rim)">
            <path d="M430 480h262v390H430z" fill="url(#bore)"/>
            <path d="M430 480h262v40L518 560z" fill="#00506e" opacity=".7"/>
            <path d="M688 740Q690 715 710 705L796 560V480H858V850H688z" fill="url(#boreR)"/>
            <path d="M688 740Q690 715 705 710L760 675V838Q700 845 688 815z" fill="#005472"/>
            <path d="M688 812Q710 845 760 832Q820 805 845 740V890H688z" fill="#000088"/>
          </g>
          <path d="M500 520Q630 440 760 520Q800 560 797 610L517 565z" fill="#003a4a"/>
          <path d="M517 565C510 520 570 490 630 490C710 490 790 545 797 610C797 660 740 680 705 711C600 690 520 620 517 565z" fill="url(#holeBg)"/>
          <!-- probe labels -->
          <path d="M466 965v58" stroke="#fff" stroke-width="3"/>
          <path d="M432 976h14" stroke="#000" stroke-width="3"/>
          <path d="M314 935h105l21 26-21 28H314z" fill="#f00" stroke="#000" stroke-width="3"/>
          <path d="M349 997h98l18 27-18 28H349z" fill="#00f" stroke="#000" stroke-width="3"/>
          <text x="325" y="977" class="probe">Max</text>
          <text x="358" y="1040" class="probe">Min</text>
        </svg>

        <div class="brand"><strong>Ansys</strong><span>2021 R2</span></div>

        <div class="scale">
          <div class="ticks upper"><span>0.00</span><span>50.00</span><span>100.00<em>(mm)</em></span></div>
          <div class="ruler"><i></i><i></i><i></i><i></i></div>
          <div class="ticks lower"><span>25.00</span><span>75.00</span></div>
        </div>

        <svg class="triad" viewBox="0 0 120 110">
          <defs><radialGradient id="ball" cx=".6" cy=".35"><stop offset="0" stop-color="#00e0e0"/><stop offset="1" stop-color="#007878"/></radialGradient></defs>
          <text x="9" y="11" fill="#00f">Z</text>
          <text x="23" y="52" fill="#0a0">Y</text>
          <text x="108" y="100" fill="#f00">X</text>
          <circle cx="20" cy="68" r="8" fill="#004c00"/>
          <path d="M12 96l6-28 5 2-8 26z" fill="#009000"/>
          <path d="M8 40h4l2 57h-4z" fill="#00008c"/>
          <path d="M10 22l9 20q-9 4-17 0z" fill="#0000b8"/>
          <path d="M12 95l62 1v5l-62-2z" fill="#b00000"/>
          <path d="M74 91l22 8-22 8z" fill="#c80000"/>
          <circle cx="55" cy="45" r="8" fill="url(#ball)"/>
        </svg>
      </section>

      <div class="bottom">
        <section class="panel graph">
          <header class="titlebar">
            <h2>Graph</h2><span class="dots"></span>
            <button aria-label="Menu"><svg><use href="#i-down"/></svg></button>
            <button aria-label="Pin"><svg><use href="#i-pin"/></svg></button>
            <button aria-label="Maximize"><svg><use href="#i-max"/></svg></button>
            <button aria-label="Close"><svg><use href="#i-close"/></svg></button>
          </header>
          <div class="toolbar anim">
            <span class="grip"></span>
            <span class="lbl">Animation</span>
            <button aria-label="First"><svg><use href="#g-first"/></svg></button>
            <button aria-label="Play"><svg><use href="#g-play"/></svg></button>
            <button class="on" aria-label="Stop"><svg><use href="#g-stop"/></svg></button>
            <button aria-label="Last"><svg><use href="#g-last"/></svg></button>
            <hr>
            <button class="on" aria-label="Distributed"><svg><use href="#g-dist"/></svg></button>
            <button aria-label="Result sets"><svg><use href="#g-time"/></svg></button>
            <hr>
            <select class="drop" aria-label="Frames"><option>20 Frames</option></select>
            <select class="drop" aria-label="Duration"><option>2 Sec (Auto)</option></select>
            <hr>
            <button aria-label="Export video"><svg><use href="#g-export"/></svg></button>
            <hr>
            <button aria-label="Zoom"><svg><use href="#g-zoom"/></svg></button>
            <button aria-label="Contours"><svg><use href="#g-rgb"/></svg></button>
            <button aria-label="Camera"><svg><use href="#g-cam"/></svg></button>
            <hr>
            <button aria-label="Keyframe"><svg><use href="#g-film"/></svg></button>
            <button aria-label="Keyframes"><svg><use href="#g-film"/></svg></button>
            <hr>
            <button aria-label="Cycles"><svg><use href="#g-wave"/></svg></button>
            <input type="text" class="cycles" value="3 Cycles" aria-label="Cycles" disabled>
            <button class="sa">SA</button>
            <button class="more" aria-label="More"></button>
          </div>
          <div class="chart">
            <svg viewBox="0 0 784 157">
              <defs>
                <marker id="mg" markerWidth="9" markerHeight="9" refX="4.500" refY="4.500" markerUnits="userSpaceOnUse"><path d="M0 0h9v9H0z" fill="#008a00"/></marker>
                <marker id="mb" markerWidth="9" markerHeight="9" refX="4.500" refY="4.500" markerUnits="userSpaceOnUse"><path d="M0 0h9v9H0z" fill="#0000d0"/></marker>
                <marker id="mr" markerWidth="9" markerHeight="9" refX="4.500" refY="4.500" markerUnits="userSpaceOnUse"><path d="M0 0h9v9H0z" fill="#c00000"/></marker>
              </defs>
              <path d="M99 24.500h661.500v51M99 51.500h8M99 75.500h8M106.500 24v59M187.500 76v7M269.500 76v7M351.500 76v7M433.500 76v7M514.500 76v7M596.500 76v7M678.500 76v7M760.500 76v7" fill="none" stroke="#a6a6a6"/>
              <g transform="translate(-2 -51) scale(.3333)" fill="none" stroke-width="3">
                <path d="M955 228L2288 379" stroke="#008a00"/>
                <polyline stroke="#008a00" marker-start="url(#mg)" marker-mid="url(#mg)" marker-end="url(#mg)" points="349,377 373,374 385,374 397,374 418,371 445,368 487,362 553,352 586,349 619,343 670,337 697,334 721,331 763,325 784,322 802,319 835,310 850,304 868,295 892,283 928,262 943,246 950,235 955,228"/>
                <path d="M349 380H2288" stroke="#c00000"/>
                <polyline stroke="#c00000" marker-start="url(#mr)" marker-mid="url(#mr)" marker-end="url(#mr)" points="418,380 445,380 487,380 553,380 586,380 619,380 670,380 697,380 721,380 763,380 784,380 802,380 835,380 850,380 868,380 892,380 928,380 943,380 955,380"/>
                <polyline stroke="#0000d0" marker-start="url(#mb)" marker-mid="url(#mb)" marker-end="url(#mb)" points="349,380 373,380 385,380 397,380 418,377 445,377 487,377 553,377 586,374 619,374 670,374 697,374 721,371 763,371 784,371 802,368 835,368 850,368 868,365 892,365 928,361 943,358 955,358 2288,380"/>
              </g>
              <path d="M318.500 19v57" stroke="#000" stroke-width="3"/>
              <text x="318" y="14" class="bold">0.32464</text>
              <g text-anchor="end"><text x="95" y="30">10.854</text><text x="95" y="57">5.</text><text x="95" y="80">1.5777e-30</text></g>
              <text x="103" y="96">0.</text><text x="185" y="96">0.125</text><text x="267" y="96">0.25</text><text x="349" y="96">0.375</text><text x="431" y="96">0.5</text><text x="514" y="96">0.625</text><text x="596" y="96">0.75</text><text x="678" y="96">0.875</text><text x="751" y="96">1.</text>
              <text class="axis" transform="translate(36 67) rotate(-90)">[MPa]</text>
              <text x="428" y="121" class="axis">[s]</text>
              <path d="M106.500 130.500h654v14h-654z" fill="#f0f0f0" stroke="#a0a0a0"/>
              <text x="430" y="142">1</text>
            </svg>
          </div>
          <nav class="tabs"><a href="#messages">Messages</a><a href="#graph" class="cur">Graph</a></nav>
        </section>

        <section class="panel tabular">
          <header class="titlebar">
            <h2>Tabular Data</h2><span class="dots"></span>
            <button aria-label="Menu"><svg><use href="#i-down"/></svg></button>
            <button aria-label="Pin"><svg><use href="#i-pin"/></svg></button>
            <button aria-label="Maximize"><svg><use href="#i-max"/></svg></button>
            <button aria-label="Close"><svg><use href="#i-close"/></svg></button>
          </header>
          <div class="scroller">
            <div class="clip">
              <table class="data">
                <colgroup><col class="c-n"><col class="c-t"><col class="c-min"><col class="c-max"><col class="c-avg"></colgroup>
                <thead><tr><th></th><th>Time [s]</th><th class="red"><label><input type="checkbox" checked>Minimum [MPa]</label></th><th class="green"><label><input type="checkbox" checked>Maximum [MPa]</label></th><th class="blue"><label><input type="checkbox" checked>Average [MPa]</label></th></tr></thead>
                <tbody>
                  <tr class="tight"><th>1</th><td>1.225e-002</td><td>3.2728e-004</td><td>0.20953</td><td>4.5751e-002</td></tr>
                  <tr class="tight"><th>2</th><td>2.45e-002</td><td>4.7228e-004</td><td>0.32532</td><td>7.7551e-002</td></tr>
                  <tr class="tight"><th>3</th><td>3.0931e-002</td><td>8.1353e-004</td><td>0.37629</td><td>9.2273e-002</td></tr>
                  <tr class="tight"><th>4</th><td>3.7362e-002</td><td>1.2692e-003</td><td>0.45381</td><td>0.10632</td></tr>
                  <tr><th>5</th><td>4.7009e-002</td><td>1.4948e-003</td><td>0.5797</td><td>0.12662</td></tr>
                  <tr><th>6</th><td>6.148e-002</td><td>1.8376e-003</td><td>0.85065</td><td>0.15631</td></tr>
                  <tr><th>7</th><td>8.3185e-002</td><td>3.7672e-003</td><td>1.2911</td><td>0.20205</td></tr>
                  <tr><th>8</th><td>0.11574</td><td>5.2233e-003</td><td>1.9273</td><td>0.27767</td></tr>
                  <tr><th>9</th><td>0.13284</td><td>6.7126e-003</td><td>2.2273</td><td>0.32154</td></tr>
                  <tr><th>10</th><td>0.14993</td><td>8.4446e-003</td><td>2.5096</td><td>0.36911</td></tr>
                  <tr><th>11</th><td>0.17557</td><td>1.1099e-002</td><td>2.925</td><td>0.44929</td></tr>
                </tbody>
              </table>
            </div>
            <div class="vbar">
              <button aria-label="Scroll up"><svg><use href="#i-up"/></svg></button>
              <div class="thumb"></div><span class="fill"></span>
              <button aria-label="Scroll down"><svg><use href="#i-dn"/></svg></button>
            </div>
          </div>
        </section>
      </div>
    </main>
  </div>

</body>
</html>
```

FILE: styles.css
```css
* { box-sizing: border-box; }
body {
  margin: 0;
  background: #eeeef2;
  color: #000;
  font: 11px/16px "Open Sans", "Segoe UI", sans-serif;
}
button, input, select {
  font: inherit;
  color: inherit;
  margin: 0;
}
button {
  padding: 0;
  border: 0;
  background: none;
}
.defs { display: none; }

.app {
  display: grid;
  grid-template-columns: 338px 1fr;
  column-gap: 4px;
  height: 100vh;
  overflow: hidden;
}
.left, .right {
  display: flex;
  flex-direction: column;
  min-width: 0;
  min-height: 0;
}
.left { gap: 4px; }
.panel {
  display: flex;
  flex-direction: column;
  min-width: 0;
  min-height: 0;
}
.outline { flex: 1; }
.details { flex: 0 0 352px; }

/* title bars */
.titlebar {
  display: flex;
  align-items: center;
  flex: none;
  height: 19px;
  padding-right: 5px;
  color: #444;
}
.titlebar h2 {
  margin: 0 5px 0 1px;
  font-size: 11px;
  font-weight: normal;
}
.titlebar button {
  width: 16px;
  height: 16px;
  color: #1e1e1e;
}
.titlebar svg {
  display: block;
  width: 14px;
  height: 14px;
  margin: 1px;
}
.dots, .grip {
  --dot: #a0a0a8;
  background:
    conic-gradient(from 270deg at 1px 1px, var(--dot) 90deg, transparent 0) 0 0 / 4px 4px,
    conic-gradient(from 270deg at 1px 1px, var(--dot) 90deg, transparent 0) 2px 2px / 4px 4px;
}
.dots {
  flex: 1;
  height: 5px;
  margin-right: 3px;
}
.grip {
  flex: none;
  width: 5px;
  height: 17px;
}
.titlebar.active {
  background: #007acc;
  color: #fff;
}
.titlebar.active button { color: #fff; }
.active .dots { --dot: #59a8de; }

/* outline */
.searchbar {
  display: flex;
  align-items: center;
  flex: none;
  height: 27px;
  padding: 0 0 0 5px;
}
.searchbar .grip { margin-right: 7px; }
.drop, .search, .cycles {
  height: 23px;
  border: 1px solid #cccedb;
  border-radius: 0;
  padding: 0 3px;
  background-color: #fff;
}
.drop {
  appearance: none;
  background-image: conic-gradient(from 315deg at 50% 100%, #717171 90deg, transparent 0);
  background-repeat: no-repeat;
  background-size: 8px 4px;
  background-position: right 3px center;
}
.filter { width: 100px; }
.search { width: 90px; }
.search::placeholder { color: #a2a4a5; }
.chev { width: 22px; height: 18px; }
.chev svg { display: block; width: 14px; height: 14px; margin: 0 auto; }
.more {
  align-self: flex-end;
  width: 8px;
  height: 4px;
  background: conic-gradient(from 315deg at 50% 100%, #1e1e1e 90deg, transparent 0);
}
.searchbar .more { margin: 0 0 7px 1px; }

.tree {
  flex: 1;
  overflow: hidden;
  background: #fff;
  font-family: "DejaVu Sans Condensed", "Open Sans", sans-serif;
}
.tree ul {
  list-style: none;
  margin: 0;
  padding: 0;
}
.tree ul ul { padding-left: 27px; }
.tree li {
  background: repeating-linear-gradient(#888 0 1px, transparent 1px 2px) 7px 0 / 1px 100% no-repeat;
}
.tree li:last-child { background-size: 1px 8px; }
.row {
  display: flex;
  align-items: center;
  height: 16px;
  padding-left: 3px;
  white-space: nowrap;
  background: repeating-linear-gradient(90deg, #888 0 1px, transparent 1px 2px) 7px 8px / 15px 1px no-repeat;
}
.row.root { background: none; }
.leaf { padding-left: 12px; }
.exp {
  flex: none;
  width: 9px;
  height: 9px;
  border: 1px solid #777;
  background: linear-gradient(#000, #000) 1px 3px / 5px 1px no-repeat #fff;
}
.plus {
  background:
    linear-gradient(#000, #000) 1px 3px / 5px 1px no-repeat,
    linear-gradient(#000, #000) 3px 1px / 1px 5px no-repeat #fff;
}
.st {
  flex: none;
  width: 9px;
  height: 12px;
  margin: 4px 0 0 9px;
}
.st.tall { height: 14px; margin-top: 2px; }
.ico {
  flex: none;
  width: 15px;
  height: 15px;
  margin: 0 4px 0 1px;
}
.selected { background: #eee; }

/* details */
.scroller {
  display: flex;
  flex: 1;
  min-height: 0;
}
.clip {
  flex: 1;
  min-width: 0;
  overflow: hidden;
}
table {
  border-collapse: collapse;
  table-layout: fixed;
}
.props {
  width: 100%;
  background: #fff;
}
.c-gut { width: 8px; }
.c-name { width: 122px; }
.props td, .props th {
  height: 18px;
  padding: 0 3px;
  border: 1px solid #a0a0a0;
  line-height: 17px;
  text-align: left;
  white-space: nowrap;
  overflow: hidden;
}
.props .gut {
  padding: 0;
  border-width: 0 1px 0 0;
}
.gut .exp { display: block; margin-left: -3px; }
.props .ro { background: #e7e6e2; }
label {
  display: flex;
  align-items: center;
}
input[type="checkbox"] {
  appearance: none;
  flex: none;
  width: 12px;
  height: 12px;
  margin-right: 4px;
  border: 1px solid #bbb;
  background: #fff;
}
.vbar {
  display: flex;
  flex-direction: column;
  flex: none;
  width: 17px;
  background: #f0f0f0;
}
.vbar button { height: 17px; }
.vbar svg { display: block; width: 14px; height: 14px; margin: 0 auto; }
.vbar .fill { flex: 1; }
.thumb {
  height: 66px;
  margin: 0 1px;
  background: #cdcdcd;
}
.details .thumb { height: 206px; }

/* toolbars */
.toolbar {
  display: flex;
  align-items: center;
  flex: none;
  height: 25px;
  padding-left: 10px;
  white-space: nowrap;
  overflow: hidden;
}
.toolbar .grip { margin-right: 7px; }
.toolbar button {
  display: flex;
  align-items: center;
  justify-content: center;
  flex: none;
  width: 22px;
  height: 22px;
}
.toolbar svg {
  flex: none;
  width: 16px;
  height: 16px;
}
.toolbar hr {
  flex: none;
  width: 1px;
  height: 20px;
  margin: 0 3px;
  border: 0;
  background: #cccedb;
}
.toolbar .on { border: 1px solid #3399ff; }
.toolbar .wide { width: 33px; gap: 6px; }
.toolbar .text {
  width: auto;
  gap: 2px;
  padding: 0 4px 0 5px;
}
.arr {
  width: 6px;
  height: 3px;
  background: conic-gradient(from 315deg at 50% 100%, #717171 90deg, transparent 0);
}
.lbl { padding-right: 4px; }
.empty { padding: 0 5px 0 8px; }
.toolbar .more {
  width: 8px;
  height: 4px;
  margin: 0 0 5px 6px;
}

/* 3D view */
.viewport {
  position: relative;
  flex: 1;
  min-height: 0;
  overflow: hidden;
  padding: 14px 15px;
  background: linear-gradient(#6b8bde, #fff);
}
.caption {
  display: flex;
  flex-direction: column;
  line-height: 15px;
}
.legend {
  display: flex;
  gap: 8px;
  margin-top: 14px;
}
.bands {
  display: flex;
  flex-direction: column;
  width: 16px;
  height: 153px;
  margin-top: 7px;
  border: 1px solid #000;
  border-width: 3px 1px;
}
.bands i { flex: 1; border-top: 1px solid #000; }
.b1 { background: #f00; }
.b2 { background: #ffb200; }
.b3 { background: #ff0; }
.b4 { background: #b2ff00; }
.b5 { background: #0f0; }
.b6 { background: #00ffb2; }
.b7 { background: #0ff; }
.b8 { background: #00b2ff; }
.b9 { background: #00f; }
.values {
  display: flex;
  flex-direction: column;
  justify-content: space-between;
  height: 166px;
  font-size: 12px;
}
.part {
  position: absolute;
  left: 258px;
  top: 0;
  width: 440px;
  height: 405px;
}
.probe {
  fill: #fff;
  font-size: 36px;
}
.brand {
  position: absolute;
  right: 16px;
  top: 20px;
  display: flex;
  flex-direction: column;
  align-items: flex-end;
  color: #fff;
}
.brand strong { font: bold 31px/32px Inter, sans-serif; }
.brand span { font: 600 17px/24px Inter, sans-serif; }
.scale {
  position: absolute;
  left: 50%;
  bottom: 16px;
  width: 446px;
  margin-left: -223px;
}
.ticks {
  display: flex;
  justify-content: space-between;
}
.ticks span {
  position: relative;
  display: flex;
  justify-content: center;
  width: 0;
  white-space: nowrap;
}
.ticks em {
  position: absolute;
  left: 20px;
  font-style: normal;
}
.lower { padding: 0 111px; }
.ruler {
  display: flex;
  height: 12px;
  margin: 0 0 4px;
  border: 1px solid #000;
  background: #fff;
}
.ruler i { flex: 1; }
.ruler i:nth-child(odd) { background: #000; }
.triad {
  position: absolute;
  right: 0;
  bottom: 85px;
  width: 120px;
  height: 110px;
  font-size: 12px;
}

/* bottom panels */
.bottom {
  display: grid;
  grid-template-columns: 1fr 1fr;
  gap: 4px;
  flex: none;
  height: 227px;
  padding-top: 4px;
}
.bottom .panel { border-top: 1px solid #cccedb; }
.bottom .titlebar {
  height: 18px;
  border: 1px solid #cccedb;
  border-width: 0 1px;
}
.bottom .titlebar h2 { margin-left: 4px; }
.anim { height: 28px; }
.anim .lbl { padding: 0 5px 0 1px; }
.anim .drop { width: 100px; }
.anim .cycles {
  width: 59px;
  padding: 0 2px;
  background: #eeeef2;
  color: #a2a4a5;
}
.anim .sa {
  color: #444;
  font-weight: bold;
}
.anim .more { margin: 0 0 7px 3px; }
.chart {
  flex: 1;
  min-height: 0;
  overflow: hidden;
  background: #fff;
  border-bottom: 1px solid #cccedb;
}
.chart svg {
  display: block;
  width: 100%;
}
.chart text { font-size: 11px; }
.chart .bold { font-weight: bold; }
.chart .axis { font-size: 13px; font-weight: bold; }
.tabs {
  display: flex;
  flex: none;
  height: 18px;
  line-height: 17px;
}
.tabs a {
  padding: 0 6px;
  color: #444;
  text-decoration: none;
}
.tabs .cur {
  background: #f5f5f7;
  border: 1px solid #cccedb;
  border-top: 0;
  color: #0e70c0;
}
.tabular .scroller { background: #a0a0a0; }
.data {
  width: 405px;
  background: #e7e6e2;
}
.c-n { width: 20px; }
.c-t { width: 70px; }
.c-min { width: 107px; }
.c-max { width: 108px; }
.c-avg { width: 100px; }
.data td, .data th {
  height: 18px;
  padding: 0 3px;
  border: 1px solid #b8b8b8;
  font-weight: normal;
  line-height: 14px;
  text-align: left;
  white-space: nowrap;
}
.data th {
  padding: 0 2px;
  border-color: #777;
  background: #f0f0f0;
}
.data .tight td, .data .tight th { height: 15px; }
.data thead th { height: 18px; padding: 0 3px; }
.data input {
  width: 14px;
  height: 14px;
  border: 1px solid #777;
}
.data input::after {
  content: "";
  display: block;
  width: 4px;
  height: 7px;
  margin: 0 0 0 4px;
  border: solid #000;
  border-width: 0 2px 2px 0;
  transform: rotate(45deg);
}
.red { color: #c00000; }
.green { color: #008a00; }
.blue { color: #0000d0; }
```
